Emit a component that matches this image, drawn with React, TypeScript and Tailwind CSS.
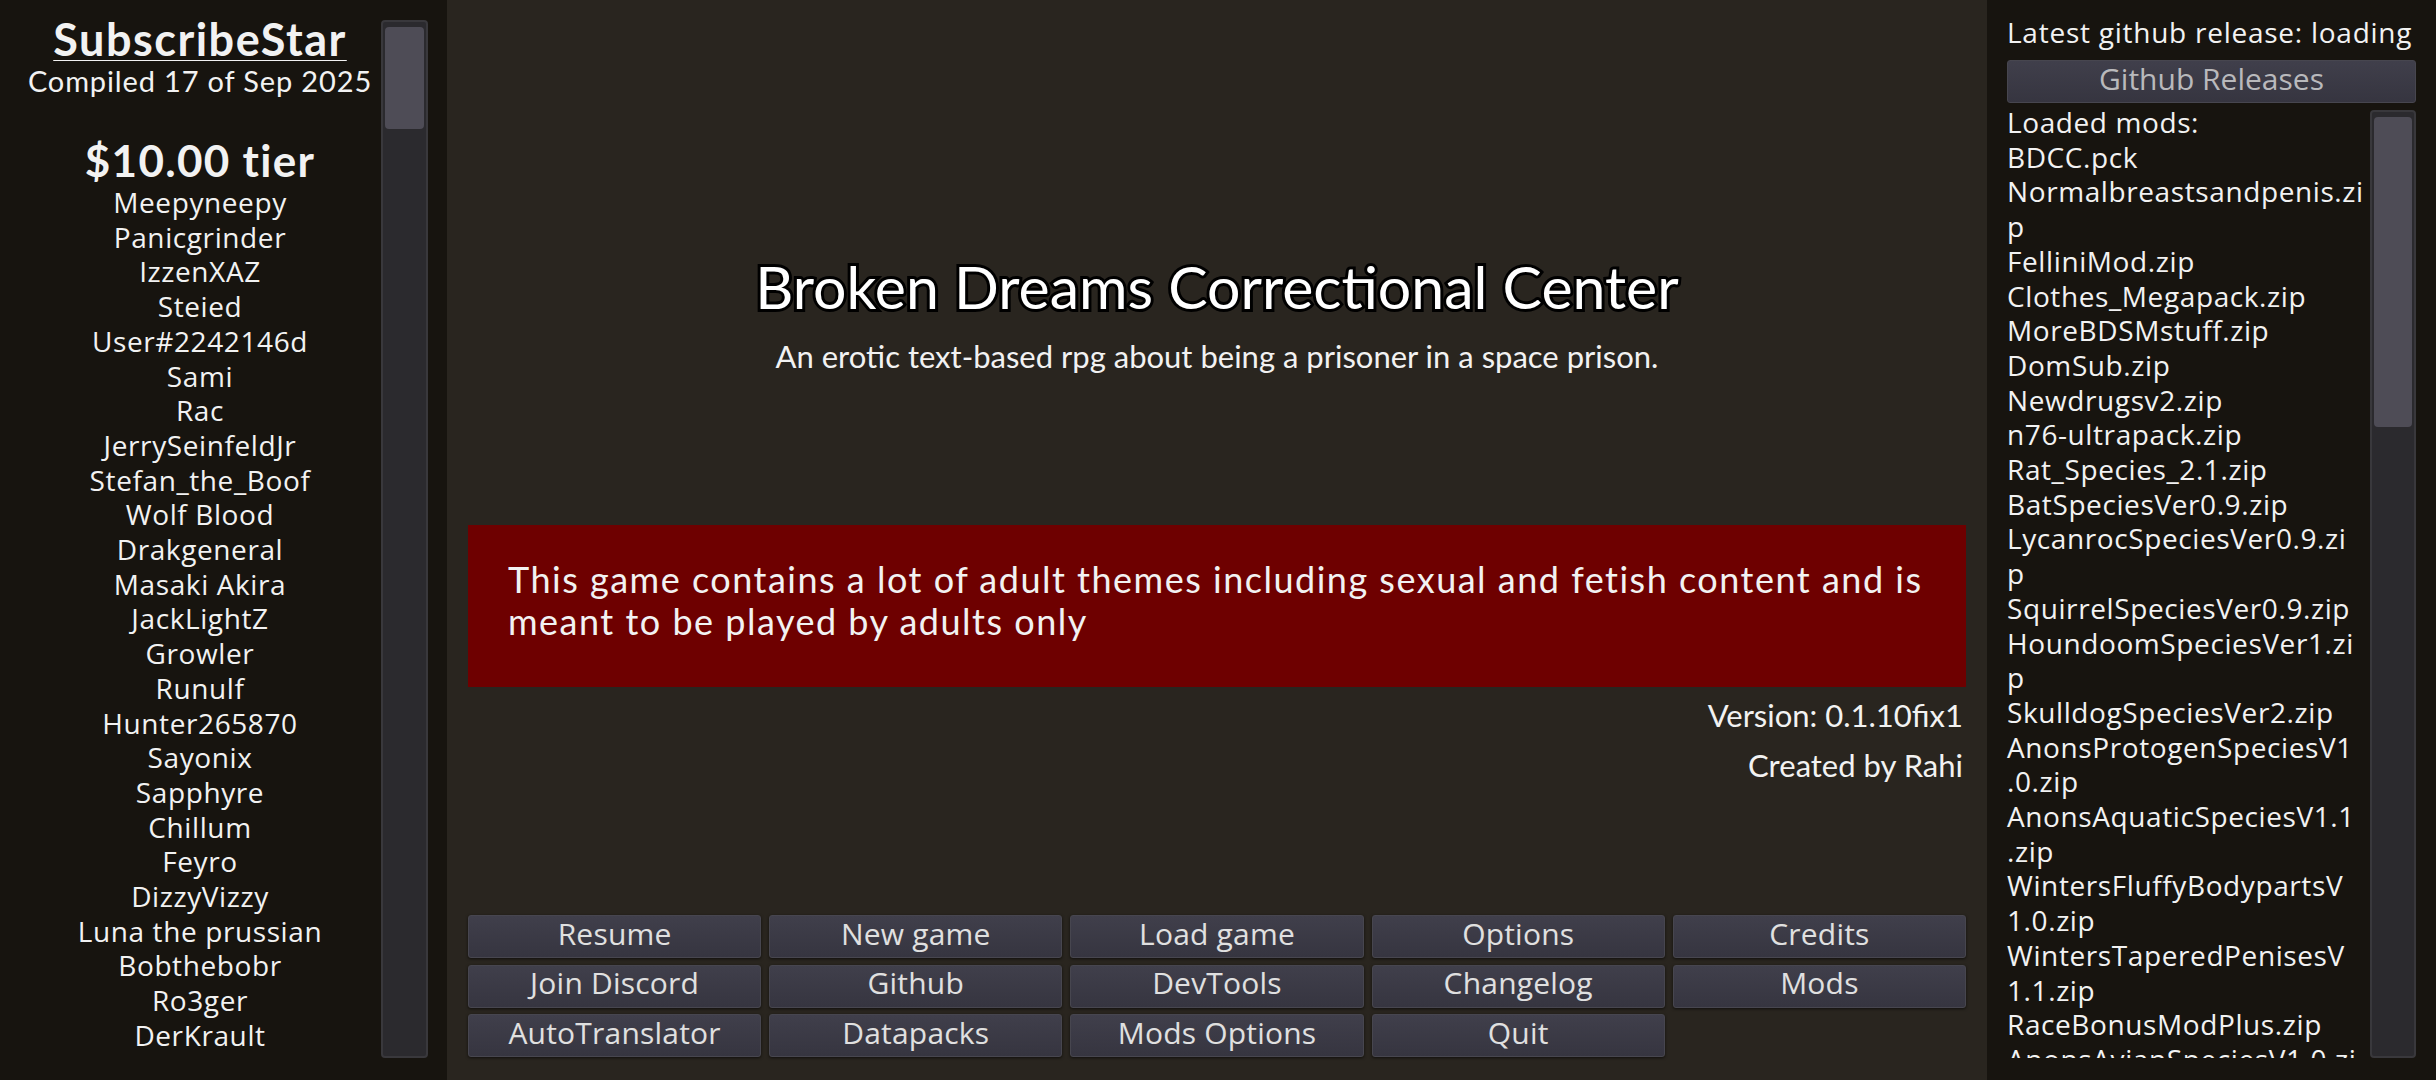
import React from 'react';

const names = [
  'Meepyneepy',
  'Panicgrinder',
  'IzzenXAZ',
  'Steied',
  'User#2242146d',
  'Sami',
  'Rac',
  'JerrySeinfeldJr',
  'Stefan_the_Boof',
  'Wolf Blood',
  'Drakgeneral',
  'Masaki Akira',
  'JackLightZ',
  'Growler',
  'Runulf',
  'Hunter265870',
  'Sayonix',
  'Sapphyre',
  'Chillum',
  'Feyro',
  'DizzyVizzy',
  'Luna the prussian',
  'Bobthebobr',
  'Ro3ger',
  'DerKrault',
  'Bimbus',
];

// lines are kept as the game wraps them
const modLines = [
  'Loaded mods:',
  'BDCC.pck',
  'Normalbreastsandpenis.zi',
  'p',
  'FelliniMod.zip',
  'Clothes_Megapack.zip',
  'MoreBDSMstuff.zip',
  'DomSub.zip',
  'Newdrugsv2.zip',
  'n76-ultrapack.zip',
  'Rat_Species_2.1.zip',
  'BatSpeciesVer0.9.zip',
  'LycanrocSpeciesVer0.9.zi',
  'p',
  'SquirrelSpeciesVer0.9.zip',
  'HoundoomSpeciesVer1.zi',
  'p',
  'SkulldogSpeciesVer2.zip',
  'AnonsProtogenSpeciesV1',
  '.0.zip',
  'AnonsAquaticSpeciesV1.1',
  '.zip',
  'WintersFluffyBodypartsV',
  '1.0.zip',
  'WintersTaperedPenisesV',
  '1.1.zip',
  'RaceBonusModPlus.zip',
  'AnonsAvianSpeciesV1.0.zi',
];

const menu = [
  'Resume',
  'New game',
  'Load game',
  'Options',
  'Credits',
  'Join Discord',
  'Github',
  'DevTools',
  'Changelog',
  'Mods',
  'AutoTranslator',
  'Datapacks',
  'Mods Options',
  'Quit',
];

const Scrollbar: React.FC<{ className: string; thumb: string }> = ({ className, thumb }) => (
  <div
    className={`shrink-0 rounded-[4px] border-2 border-[#39383c] bg-[#2b2a2e] px-[2px] pt-[5px] ${className}`}
  >
    <div className={`rounded-[4px] bg-[#4e4c56] ${thumb}`} />
  </div>
);

export default function App() {
  return (
    <div className="flex h-[1080px] w-[2436px] overflow-hidden font-['Open_Sans',sans-serif] text-[#f2f2f2]">
      {/* Supporters */}
      <aside className="flex w-[447px] shrink-0 bg-[#17140f]">
        <div className="h-[1060px] w-[381px] shrink-0 overflow-hidden pl-[19px] text-center">
          <div className="pt-[15px] font-['Lato',sans-serif] text-[45px] font-bold leading-[48px] tracking-[1.5px] underline decoration-1 underline-offset-[4px]">
            SubscribeStar
          </div>
          <div className="font-['Lato',sans-serif] text-[29px] leading-[35px] tracking-[0.85px]">
            Compiled 17 of Sep 2025
          </div>
          <div className="mt-[41px] font-['Lato',sans-serif] text-[44px] font-bold leading-[42px] tracking-[1.3px]">
            $10.00 tier
          </div>
          <div className="mt-[4px] text-[28px] leading-[34.7px] tracking-[0.6px]">
            {names.map((n) => (
              <div key={n} className="whitespace-nowrap">
                {n}
              </div>
            ))}
          </div>
        </div>
        <Scrollbar className="mt-[20px] h-[1038px] w-[47px]" thumb="h-[102px]" />
      </aside>

      {/* Main menu */}
      <main className="flex flex-1 flex-col bg-[#29251f] px-[21px] pb-[23px]">
        <div className="pt-[251px] text-center font-['Lato',sans-serif] text-[59px] leading-[72px] text-white [-webkit-text-stroke:6px_#000] [paint-order:stroke_fill]">
          Broken Dreams Correctional Center
        </div>
        <div className="mt-[13px] text-center font-['Lato',sans-serif] text-[31px] leading-[40px]">
          An erotic text-based rpg about being a prisoner in a space prison.
        </div>
        <div className="mt-[149px] h-[162px] whitespace-nowrap bg-[#6e0000] pl-[40px] pt-[33px] font-['Lato',sans-serif] text-[36px] leading-[42px] tracking-[1.5px]">
          This game contains a lot of adult themes including sexual and fetish content and is
          <br />
          meant to be played by adults only
        </div>
        <div className="mt-[3px] pr-[3px] text-right font-['Lato',sans-serif] text-[31px] leading-[50px]">
          <div>Version: 0.1.10fix1</div>
          <div>Created by Rahi</div>
        </div>
        <div className="mt-auto grid grid-cols-5 gap-x-[8px] gap-y-[6.5px]">
          {menu.map((label) => (
            <button
              key={label}
              className="h-[43px] rounded-[3px] border border-[#47464f] bg-gradient-to-b from-[#403f4b] to-[#363540] pb-[6px] text-[30px] leading-none tracking-[0.2px] text-[#e0e0e0] shadow-[0_1px_3px_rgba(0,0,0,0.6)]"
            >
              {label}
            </button>
          ))}
        </div>
      </main>

      {/* Updates and mods */}
      <aside className="flex w-[449px] shrink-0 flex-col bg-[#17140f] px-[20px] pt-[15px]">
        <div className="whitespace-nowrap text-[28px] leading-[35px] tracking-[0.75px]">
          Latest github release: loading
        </div>
        <button className="mt-[10px] h-[43px] rounded-[3px] border border-[#47464f] bg-gradient-to-b from-[#403f4b] to-[#363540] pb-[6px] text-[30px] leading-none text-[#b9b9bc]">
          Github Releases
        </button>
        <div className="flex h-[955px] gap-[2px]">
          <div className="w-[361px] shrink-0 overflow-y-clip pt-[2px] text-[28px] leading-[34.7px] tracking-[0.6px]">
            {modLines.map((line, i) => (
              <div key={i} className="whitespace-nowrap">
                {line}
              </div>
            ))}
          </div>
          <Scrollbar className="mt-[7px] h-[948px] w-[46px]" thumb="h-[310px]" />
        </div>
      </aside>
    </div>
  );
}
